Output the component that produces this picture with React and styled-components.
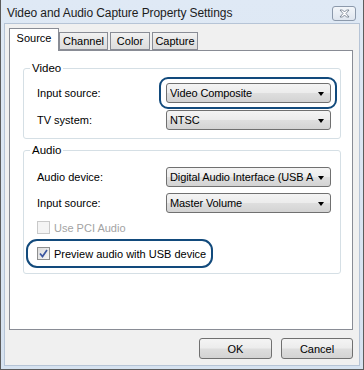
import styled, { createGlobalStyle } from 'styled-components';

const GlobalStyle = createGlobalStyle`
  body {
    margin: 0;
    font-family: "Liberation Sans", Arial, sans-serif;
    font-size: 11px;
    color: #000;
  }
`;

const Window = styled.div`
  width: 364px;
  height: 370px;
  box-sizing: border-box;
  border: 1px solid #5c5c5c;
  border-top: none;
  background: linear-gradient(180deg, #dfe9f5 0%, #d6e2f0 100%);
  display: flex;
  flex-direction: column;
`;

const TitleBar = styled.div`
  height: 23px;
  display: flex;
  align-items: center;
  justify-content: space-between;
  padding: 0 7px 0 6px;
`;

const Title = styled.span`
  font-size: 12px;
  letter-spacing: -0.08px;
  color: #1c1c1c;
  padding-top: 2px;
`;

const CloseButton = styled.div`
  width: 22px;
  height: 13px;
  margin-top: 4px;
  border: 1px solid #8c99ab;
  border-radius: 3px;
  background: linear-gradient(180deg, #f3f6fa 0%, #dfe6ef 100%);
  display: flex;
  align-items: center;
  justify-content: center;
`;

const Client = styled.div`
  flex: 1;
  margin: 0 3px 3px 3px;
  border: 1px solid #b6c4d6;
  background: #f0f0f0;
  padding: 4px 6px 6px 4px;
  display: flex;
  flex-direction: column;
`;

const TabStrip = styled.div`
  display: flex;
  align-items: flex-end;
  height: 22px;
  position: relative;
  z-index: 1;
`;

const Tab = styled.div`
  box-sizing: border-box;
  height: ${p => (p.$active ? '23px' : '18px')};
  width: ${p => p.$width}px;
  margin-right: ${p => p.$gap}px;
  margin-bottom: ${p => (p.$active ? '-1px' : '0')};
  border: 1px solid #898c95;
  border-bottom: ${p => (p.$active ? 'none' : '1px solid #898c95')};
  background: ${p => (p.$active ? '#fff' : 'linear-gradient(180deg, #f2f2f2 0%, #e6e6e6 50%, #dcdcdc 100%)')};
  display: flex;
  align-items: ${p => (p.$active ? 'flex-start' : 'center')};
  justify-content: center;
  padding-top: ${p => (p.$active ? '3px' : '0')};
`;

const Panel = styled.div`
  box-sizing: border-box;
  height: 280px;
  background: #fff;
  border: 1px solid #898c95;
  padding: 11px 11px 0 13px;
  display: flex;
  flex-direction: column;
  gap: 5px;
`;

const Group = styled.fieldset`
  margin: 0;
  padding: 0;
  border: 1px solid #d5dfe5;
  border-radius: 3px;
  min-width: 0;
`;

const Legend = styled.legend`
  margin-left: 6px;
  padding: 0 2px;
  font-size: 11.5px;
  line-height: 13px;
`;

const GroupBody = styled.div`
  padding: ${p => p.$pad};
`;

const Rows = styled.div`
  display: grid;
  grid-template-columns: 1fr 165px;
  row-gap: ${p => p.$gap}px;
  align-items: center;
`;

const Label = styled.span`
  line-height: 14px;
`;

const ComboBox = styled.div`
  position: relative;
  box-sizing: border-box;
  height: 20px;
  border: 1px solid #707070;
  border-radius: 3px;
  background: linear-gradient(180deg, #f4f4f4 0%, #ececec 48%, #dedede 52%, #d3d3d3 100%);
  display: flex;
  align-items: center;
  padding: 0 6px 0 3px;
  gap: 3px;

  ${p =>
    p.$highlight &&
    `
    &::after {
      content: '';
      position: absolute;
      top: -7px;
      bottom: -7px;
      left: -8px;
      right: -7px;
      border: 2px solid #124a7c;
      border-radius: 9px;
    }
  `}
`;

const ComboText = styled.span`
  flex: 1;
  overflow: hidden;
  white-space: nowrap;
  letter-spacing: -0.1px;
`;

const Arrow = styled.span`
  flex-shrink: 0;
  width: 0;
  height: 0;
  border-left: 3.5px solid transparent;
  border-right: 3.5px solid transparent;
  border-top: 4px solid #000;
  margin-top: 1px;
`;

const CheckRow = styled.label`
  position: relative;
  display: inline-flex;
  align-items: center;
  gap: 4px;
  margin-top: ${p => p.$top}px;
  color: ${p => (p.$disabled ? '#a3a3a3' : '#000')};

  ${p =>
    p.$highlight &&
    `
    &::after {
      content: '';
      position: absolute;
      top: -8px;
      bottom: -8px;
      left: -11px;
      right: -7px;
      border: 2px solid #124a7c;
      border-radius: 11px;
    }
  `}
`;

const CheckBox = styled.span`
  box-sizing: border-box;
  width: 13px;
  height: 13px;
  border: 1px solid ${p => (p.$disabled ? '#c9c9c9' : '#8e8f8f')};
  background: ${p => (p.$disabled ? '#f4f4f4' : 'linear-gradient(135deg, #dcdcdc 0%, #f6f6f6 100%)')};
  display: flex;
  align-items: center;
  justify-content: center;
`;

const Footer = styled.div`
  display: flex;
  justify-content: flex-end;
  gap: 9px;
  margin-top: 8px;
`;

const Button = styled.div`
  box-sizing: border-box;
  width: ${p => p.$width}px;
  height: 21px;
  border: 1px solid #707070;
  border-radius: 3px;
  background: linear-gradient(180deg, #f4f4f4 0%, #ececec 48%, #dedede 52%, #d3d3d3 100%);
  display: flex;
  align-items: center;
  justify-content: center;
`;

const Combo = ({ value, highlight }) => (
  <ComboBox $highlight={highlight}>
    <ComboText>{value}</ComboText>
    <Arrow />
  </ComboBox>
);

const Check = ({ label, checked, disabled, highlight, top }) => (
  <div>
    <CheckRow $disabled={disabled} $highlight={highlight} $top={top}>
      <CheckBox $disabled={disabled}>
        {checked && (
          <svg width="9" height="9" viewBox="0 0 9 9">
            <path d="M1 4.5 L3.5 7.5 L8 1" fill="none" stroke="#3b56a0" strokeWidth="1.7" />
          </svg>
        )}
      </CheckBox>
      {label}
    </CheckRow>
  </div>
);

const App = () => {
  return (
    <Window>
      <GlobalStyle />
      <TitleBar>
        <Title>Video and Audio Capture Property Settings</Title>
        <CloseButton>
          <svg width="11" height="9" viewBox="0 0 11 9">
            <path
              d="M1 1 L3.5 1 L5.5 3 L7.5 1 L10 1 L7 4.5 L10 8 L7.5 8 L5.5 6 L3.5 8 L1 8 L4 4.5 Z"
              fill="#fff"
              stroke="#6b7686"
              strokeWidth="0.8"
            />
          </svg>
        </CloseButton>
      </TitleBar>
      <Client>
        <TabStrip>
          <Tab $active $width={50} $gap={0}>Source</Tab>
          <Tab $width={49} $gap={2}>Channel</Tab>
          <Tab $width={40} $gap={2}>Color</Tab>
          <Tab $width={46} $gap={0}>Capture</Tab>
        </TabStrip>
        <Panel>
          <Group>
            <Legend>Video</Legend>
            <GroupBody $pad="8px 9px 8px 13px">
              <Rows $gap={7}>
                <Label>Input source:</Label>
                <Combo value="Video Composite" highlight />
                <Label>TV system:</Label>
                <Combo value="NTSC" />
              </Rows>
            </GroupBody>
          </Group>
          <Group>
            <Legend>Audio</Legend>
            <GroupBody $pad="10px 9px 13px 13px">
              <Rows $gap={6}>
                <Label>Audio device:</Label>
                <Combo value="Digital Audio Interface (USB A" />
                <Label>Input source:</Label>
                <Combo value="Master Volume" />
              </Rows>
              <Check label="Use PCI Audio" disabled top={8} />
              <Check label="Preview audio with USB device" checked highlight top={11} />
            </GroupBody>
          </Group>
        </Panel>
        <Footer>
          <Button $width={73}>OK</Button>
          <Button $width={72}>Cancel</Button>
        </Footer>
      </Client>
    </Window>
  );
};

export default App;
